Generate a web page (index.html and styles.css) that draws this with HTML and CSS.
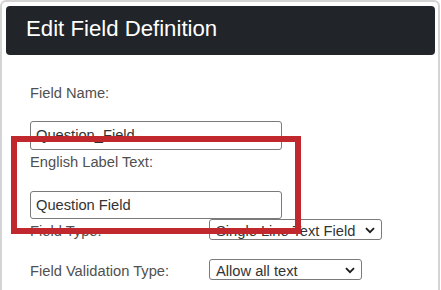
FILE: index.html
```html
<!DOCTYPE html>
<html>
<head>
<meta charset="utf-8">
<link rel="stylesheet" href="styles.css">
</head>
<body>
<div class="card">
  <div class="header">Edit Field Definition</div>
  <div class="form">
    <div class="label first">Field Name:</div>
    <div class="input tall">Question_Field</div>
    <div class="label second">English Label Text:</div>
    <div class="input">Question Field</div>
    <div class="row">
      <div class="row-label">Field Type:</div>
      <div class="select wide">Single Line Text Field<svg class="chev" width="10" height="7" viewBox="0 0 10 7"><path d="M1 1.2 L5 5.2 L9 1.2" fill="none" stroke="#1a1a1a" stroke-width="1.8"/></svg></div>
    </div>
    <div class="row second-row">
      <div class="row-label">Field Validation Type:</div>
      <div class="select narrow">Allow all text<svg class="chev" width="10" height="7" viewBox="0 0 10 7"><path d="M1 1.2 L5 5.2 L9 1.2" fill="none" stroke="#1a1a1a" stroke-width="1.8"/></svg></div>
    </div>
  </div>
  <div class="highlight"></div>
</div>
</body>
</html>
```
FILE: styles.css
```css
html, body {
  margin: 0;
  padding: 0;
  background: #ffffff;
}
body {
  font-family: "Liberation Sans", Arial, sans-serif;
  overflow: hidden;
  width: 441px;
  height: 290px;
}
.card {
  position: relative;
  box-sizing: border-box;
  width: 440px;
  height: 290px;
  border: 2px solid #d4d4d4;
  border-bottom: none;
  border-radius: 6px 6px 0 0;
  padding: 4px 3px 0 4px;
}
.header {
  height: 49px;
  box-sizing: border-box;
  background: #212529;
  border-radius: 4px;
  color: #ffffff;
  font-size: 22.2px;
  display: flex;
  align-items: center;
  padding: 0 0 3px 20px;
}
.form {
  padding-left: 24px;
  font-size: 14.7px;
  line-height: 17px;
}
.label {
  color: #505050;
}
.label.first {
  margin-top: 30px;
}
.label.second {
  margin-top: 4px;
}
.input {
  box-sizing: border-box;
  width: 252px;
  height: 28px;
  margin-top: 20px;
  border: 1px solid #7a7a7a;
  border-radius: 3px;
  padding: 0 5px;
  color: #333333;
  display: flex;
  align-items: center;
  overflow: hidden;
}
.input.tall {
  height: 29px;
  margin-top: 19px;
}
.row {
  display: flex;
  align-items: baseline;
}
.second-row {
  margin-top: 19px;
}
.row-label {
  width: 179px;
  color: #505050;
}
.select {
  box-sizing: border-box;
  height: 21px;
  border: 1px solid #7a7a7a;
  border-radius: 3px;
  padding: 2px 6px 0 6px;
  line-height: 16px;
  color: #333333;
  display: inline-flex;
  align-items: center;
}
.select.wide {
  width: 173px;
}
.select.narrow {
  width: 153px;
}
.chev {
  margin-left: auto;
  flex: none;
}
.highlight {
  position: absolute;
  left: 9px;
  top: 134px;
  width: 290px;
  height: 98px;
  box-sizing: border-box;
  border: 6px solid #c0282d;
}
```
